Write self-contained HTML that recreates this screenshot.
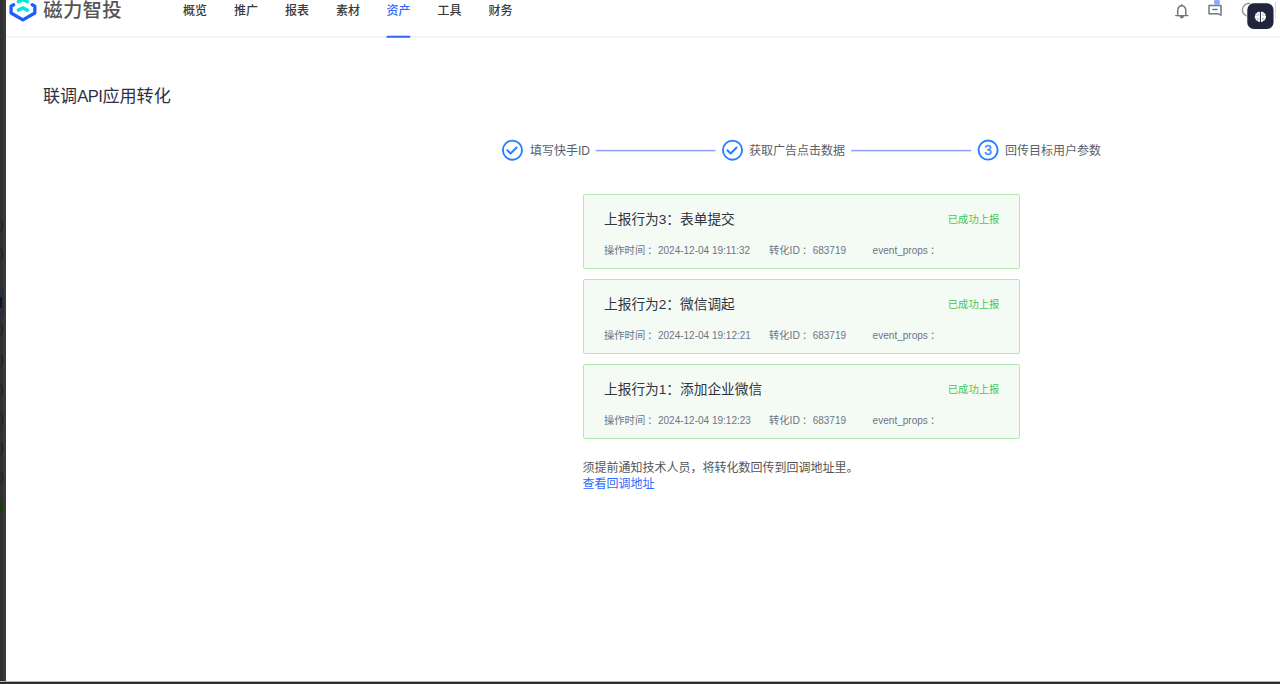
<!DOCTYPE html>
<html lang="zh-CN">
<head>
<meta charset="utf-8">
<title>联调API应用转化</title>
<style>
*{box-sizing:border-box;margin:0;padding:0}
html,body{width:1280px;height:684px;overflow:hidden;background:#fff}
body{font-family:"Liberation Sans","Noto Sans CJK SC",sans-serif;color:#333;position:relative;font-size:12px}
.abs{position:absolute;white-space:nowrap}
#strip{left:0;top:0;width:6px;height:684px;background:linear-gradient(90deg,#2e2e2f 0,#303031 2px,#3c3c3d 5px,#3a3a3a 6px)}
#strip i{position:absolute;display:block}
#strip{overflow:hidden}
#bottom{left:0;top:681px;width:1280px;height:3px;background:linear-gradient(180deg,#b4b4b4 0,#b4b4b4 1px,#292929 1px,#292929 2px,#313131 2px)}
#hdrline{left:6px;top:36.4px;width:1274px;height:1px;background:#edf1f2}
#logotext{left:43.2px;top:-3.6px;font-size:19.4px;letter-spacing:.3px;line-height:28px;color:#555;font-weight:500}
.nav{top:1px;height:20px;line-height:20px;font-size:12px;color:#3a3a3a;font-weight:500}
.nav.on{color:#326bfb}
#navline{left:386.7px;top:35.4px;width:23.6px;height:2px;background:#326bfb;border-radius:1px}
#title{left:43px;top:84.9px;font-size:17.1px;line-height:24px;color:#2c3145}
.step{top:142px;height:19px;line-height:19px;font-size:12px;color:#585e6d}
.sline{top:149.9px;height:1.4px;background:#86a3f8}
.card{left:583px;width:437px;height:75px;background:#f4fbf5;border:1px solid #b0e9b2;border-radius:2px}
.card .t{left:20px;top:14.7px;font-size:13.7px;line-height:20px;color:#2f3440}
.card .ok{right:19.7px;top:16.7px;font-size:10.3px;line-height:16px;color:#45c651}
.card .m{top:48px;font-size:10.3px;line-height:16px;color:#6e7484}
.card .c{padding-left:2px}
.card .l{font-size:10px;margin-left:0.5px}
.card .l2{font-size:10.05px}
#note{left:582.6px;top:460px;font-size:12px;line-height:17px;color:#555}
#link{left:582.6px;top:476.2px;font-size:12px;line-height:17px;color:#2f6bff}
</style>
</head>
<body>
<svg class="abs" style="left:0;top:30px" width="1280" height="10" viewBox="0 30 1280 10"><rect x="6" y="36.3" width="1274" height="1.25" fill="#edf0f2"/><rect x="386.4" y="35.75" width="24.1" height="1.95" rx="0.95" fill="#3166f2"/></svg>
<svg class="abs" id="logo" style="left:6px;top:0" width="36" height="26" viewBox="6 0 36 26">
  <path d="M13.7 4.75 L11.05 6.2 L11.05 13 L22.9 19.85 L34.85 13 L34.85 6.2 L32.2 4.75" fill="none" stroke="#1d5cff" stroke-width="3.25" stroke-linecap="round" stroke-linejoin="round"/>
  <path d="M18.5 10.1 L22.9 7.9 L27.3 10.1" fill="none" stroke="#00e8dd" stroke-width="3.6" stroke-linecap="round" stroke-linejoin="miter"/>
  <path d="M18.5 1.7 L22.9 -0.5 L27.3 1.7" fill="none" stroke="#00e8dd" stroke-width="3.6" stroke-linecap="round" stroke-linejoin="miter"/>
</svg>
<div class="abs" id="logotext">磁力智投</div>
<div class="abs nav" style="left:183px">概览</div>
<div class="abs nav" style="left:234px">推广</div>
<div class="abs nav" style="left:285px">报表</div>
<div class="abs nav" style="left:336px">素材</div>
<div class="abs nav on" style="left:386.5px">资产</div>
<div class="abs nav" style="left:437.5px">工具</div>
<div class="abs nav" style="left:488.5px">财务</div>


<svg class="abs" style="left:1168px;top:0" width="112" height="36" viewBox="1168 0 112 36">
  <g fill="none" stroke="#6f7782" stroke-width="1.5" stroke-linecap="round" stroke-linejoin="round">
    <path transform="translate(0 .5)" d="M1177.7 15 V10.4 C1177.7 7.4 1179.4 5.5 1181.75 5.1 C1184.1 5.5 1185.8 7.4 1185.8 10.4 V15"/>
    <path transform="translate(0 .5)" stroke-width="1.25" d="M1175.6 15.1 H1188"/>
    <path transform="translate(0 .5)" d="M1181.75 4.4 V5.2"/>
    <path d="M1209 5.5 H1221 V15.2 L1218.2 13.8 H1209 Z"/>
    <path d="M1213 9.5 H1217"/>
  </g>
  <path transform="translate(0 .5)" d="M1179.4 15.4 H1184.1 Q1183.4 17.9 1181.75 17.9 Q1180.1 17.9 1179.4 15.4 Z" fill="#6f7782"/>
  <circle cx="1217" cy="2.2" r="3" fill="#8eaaf8"/>
  <circle cx="1249" cy="9.9" r="6.6" fill="none" stroke="#8b9199" stroke-width="1.3"/>
  <rect x="1275" y="1.5" width="1" height="17" fill="#d9dde6"/>
  <rect x="1246.6" y="2.6" width="27.6" height="27" rx="7" fill="#f4f5f8"/>
  <rect x="1247.3" y="3.3" width="26.2" height="25.6" rx="6.5" fill="#20243c"/>
  <path d="M1259.9 11.9 C1258.6 11.3 1257.3 11.8 1257 12.9 C1255.6 13 1254.9 14.3 1255.4 15.4 C1254.4 16.3 1254.5 17.9 1255.5 18.6 C1255.3 20 1256.5 21 1257.6 20.7 C1258.2 21.9 1259.3 22.2 1259.9 21.7 Z" fill="#fff"/>
  <path d="M 1260.9 11.9 C 1262.2 11.3 1263.5 11.8 1263.8 12.9 C 1265.2 13.0 1265.9 14.3 1265.4 15.4 C 1266.4 16.3 1266.3 17.9 1265.3 18.6 C 1265.5 20.0 1264.3 21.0 1263.2 20.7 C 1262.6 21.9 1261.5 22.2 1260.9 21.7 Z" fill="#fff"/>
  <g stroke="#20243c" stroke-width="0.6" fill="none" opacity="0.5">
    <path d="M1256.2 15.2 H1258.3 V13.4 M1256.6 18.4 H1258.4 M1257.8 18.4 V20.2"/>
    <path d="M1264.6 15.2 H1262.5 V13.4 M1264.2 18.4 H1262.4 M1263 18.4 V20.2"/>
  </g>
</svg>

<svg class="abs" style="left:496px;top:136px" width="510" height="30" viewBox="496 136 510 30">
  <g fill="none" stroke="#2b7fff" stroke-width="1.9" stroke-linecap="round" stroke-linejoin="round">
    <circle cx="512.45" cy="150.2" r="9.55"/>
    <path stroke-width="2.05" d="M507.35 150.3 L510.55 153.4 L516.55 147.5"/>
    <circle cx="732.5" cy="150.2" r="9.55"/>
    <path stroke-width="2.05" d="M727.4 150.3 L730.6 153.4 L736.6 147.5"/>
    <circle cx="988.1" cy="150.1" r="9.55"/>
  </g>
  <rect x="595.8" y="149.85" width="119.7" height="1.5" fill="#86a3f8"/>
  <rect x="851" y="149.85" width="120" height="1.5" fill="#86a3f8"/>
  <text x="988.1" y="154.9" stroke="#3a86ff" stroke-width="0.3" text-anchor="middle" font-family="Liberation Sans, sans-serif" font-size="13.8" fill="#3a86ff">3</text>
</svg>
<div class="abs" id="title">联调<span style="letter-spacing:-0.5px;font-size:16.6px">API</span>应用转化</div>

<div class="abs step" style="left:530px">填写快手ID</div>
<div class="abs step" style="left:749px">获取广告点击数据</div>
<div class="abs step" style="left:1005px">回传目标用户参数</div>

<div class="abs card" style="top:194px">
  <div class="abs t">上报行为3：表单提交</div><div class="abs ok">已成功上报</div>
  <div class="abs m" style="left:20px">操作时间<span class="c">：</span><span class="l">2024-12-04 19:11:32</span></div><div class="abs m" style="left:185px">转化ID<span class="c">：</span><span class="l">683719</span></div><div class="abs m" style="left:288.6px"><span class="l2">event_props</span><span class="c">：</span></div>
</div>
<div class="abs card" style="top:279px">
  <div class="abs t">上报行为2：微信调起</div><div class="abs ok">已成功上报</div>
  <div class="abs m" style="left:20px">操作时间<span class="c">：</span><span class="l">2024-12-04 19:12:21</span></div><div class="abs m" style="left:185px">转化ID<span class="c">：</span><span class="l">683719</span></div><div class="abs m" style="left:288.6px"><span class="l2">event_props</span><span class="c">：</span></div>
</div>
<div class="abs card" style="top:364px">
  <div class="abs t">上报行为1：添加企业微信</div><div class="abs ok">已成功上报</div>
  <div class="abs m" style="left:20px">操作时间<span class="c">：</span><span class="l">2024-12-04 19:12:23</span></div><div class="abs m" style="left:185px">转化ID<span class="c">：</span><span class="l">683719</span></div><div class="abs m" style="left:288.6px"><span class="l2">event_props</span><span class="c">：</span></div>
</div>

<div class="abs" id="note">须提前通知技术人员，将转化数回传到回调地址里。</div>
<div class="abs" id="link">查看回调地址</div>

<div class="abs" id="strip">
  <i style="left:0;top:287.5px;width:4.2px;height:29px;background:#2c2e35"></i>
  <i style="left:0;top:297px;width:1.7px;height:11px;background:#0a1535;border-radius:0 1px 1px 0"></i>
  <i style="left:0;top:499.5px;width:3px;height:14.5px;background:#1f3a15;border-radius:0 2px 2px 0"></i>
  <i style="left:-5px;top:219.5px;width:7.5px;height:11px;border:1px solid #202021;border-radius:2.5px"></i>
  <i style="left:-5px;top:248.5px;width:7.5px;height:11px;border:1px solid #202021;border-radius:2.5px"></i>
  <i style="left:-5px;top:323.5px;width:7.5px;height:11px;border:1px solid #202021;border-radius:2.5px"></i>
  <i style="left:-5px;top:355.0px;width:7.5px;height:11px;border:1px solid #202021;border-radius:2.5px"></i>
  <i style="left:-5px;top:384.5px;width:7.5px;height:11px;border:1px solid #202021;border-radius:2.5px"></i>
  <i style="left:-5px;top:413.5px;width:7.5px;height:11px;border:1px solid #202021;border-radius:2.5px"></i>
  <i style="left:-5px;top:442.5px;width:7.5px;height:11px;border:1px solid #202021;border-radius:2.5px"></i>
  <i style="left:-5px;top:471.5px;width:7.5px;height:11px;border:1px solid #202021;border-radius:2.5px"></i>
</div>
<div class="abs" id="bottom"></div>
</body>
</html>
